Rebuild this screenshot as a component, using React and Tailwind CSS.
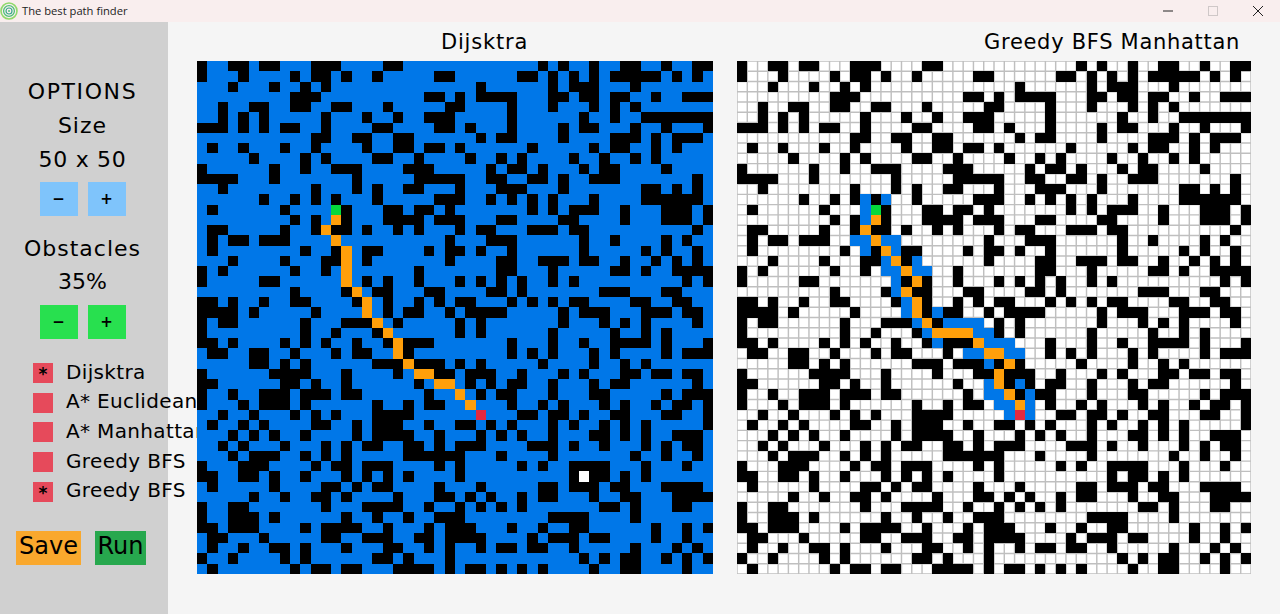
const FONT = "font-['DejaVu_Sans',sans-serif]";

// black cells per row, read off the picture (both grids share them)
const WALLS = [
  [0, 3, 4, 6, 7, 11, 12, 13, 18, 19, 33, 35, 38, 41, 42, 45, 48, 49],
  [0, 4, 9, 11, 12, 14, 17, 23, 24, 31, 32, 34, 36, 38, 40, 41, 42, 43, 44, 46, 48],
  [3, 7, 10, 12, 27, 34, 36, 37, 38, 42],
  [9, 10, 11, 22, 23, 25, 27, 28, 29, 30, 34, 35, 37, 38, 40, 41, 44, 47, 48, 49],
  [2, 5, 6, 9, 10, 13, 14, 18, 24, 25, 30, 34, 38, 40, 42],
  [2, 4, 6, 12, 16, 19, 22, 23, 24, 30, 37, 40, 43, 44, 45, 46, 47, 48, 49],
  [0, 1, 2, 4, 6, 8, 9, 12, 17, 18, 23, 24, 26, 30, 35, 37, 38, 42, 45, 49],
  [11, 12, 15, 16, 19, 20, 27, 29, 30, 35, 40, 41, 42, 44, 46, 47, 48],
  [1, 4, 8, 11, 16, 19, 20, 22, 23, 25, 32, 38, 40, 41, 44, 46],
  [5, 10, 12, 17, 18, 21, 26, 29, 31, 36, 39, 42, 44],
  [0, 7, 10, 13, 14, 15, 20, 21, 22, 28, 30, 31, 33, 37, 39, 40, 45],
  [0, 1, 2, 3, 7, 15, 21, 22, 23, 24, 25, 28, 29, 32, 33, 35, 38, 39, 40, 48],
  [2, 11, 15, 17, 20, 21, 25, 29, 30, 31, 35, 43, 44, 46, 48],
  [6, 9, 11, 13, 17, 23, 24, 25, 28, 30, 32, 34, 38, 43, 44, 45, 46, 47, 48],
  [1, 8, 14, 18, 19, 21, 22, 24, 32, 34, 36, 37, 38, 41, 45, 46, 47, 49],
  [9, 11, 14, 18, 19, 20, 21, 23, 24, 25, 29, 30, 35, 36, 41, 45, 46, 47, 49],
  [1, 2, 8, 11, 13, 14, 16, 19, 21, 25, 27, 28, 32, 33, 34, 36, 37, 48],
  [1, 3, 4, 6, 7, 8, 24, 28, 29, 30, 37, 40, 45, 47],
  [1, 10, 13, 16, 17, 22, 24, 25, 27, 30, 37, 43, 45, 48],
  [3, 8, 12, 13, 16, 24, 29, 30, 33, 34, 35, 37, 38, 41, 44, 46, 48],
  [0, 2, 9, 12, 21, 29, 30, 34, 40, 41, 43, 46, 47, 48, 49],
  [0, 6, 7, 16, 18, 21, 25, 27, 29, 31, 34, 36, 47, 49],
  [9, 14, 17, 18, 22, 23, 28, 29, 31, 39, 40, 41, 45, 46],
  [0, 1, 3, 6, 9, 10, 15, 18, 21, 23, 25, 26, 30, 32, 34, 36, 37, 42, 43, 46, 47],
  [0, 1, 2, 3, 5, 11, 18, 20, 21, 24, 26, 27, 28, 29, 35, 37, 38, 39, 43, 44, 45, 47, 48],
  [0, 2, 3, 10, 14, 15, 16, 19, 25, 27, 35, 39, 41, 43, 48],
  [0, 10, 13, 17, 25, 27, 34, 40, 43, 45],
  [0, 1, 3, 8, 10, 12, 15, 18, 20, 21, 22, 30, 34, 37, 40, 41, 42, 43, 45, 49],
  [1, 2, 5, 6, 9, 13, 15, 16, 20, 30, 32, 34, 38, 40, 45, 47, 48, 49],
  [5, 6, 8, 10, 17, 18, 19, 21, 22, 23, 25, 27, 33, 38, 41, 43],
  [0, 7, 8, 9, 10, 14, 19, 23, 24, 26, 27, 28, 31, 35, 37, 41, 42, 44, 45, 47, 48],
  [0, 1, 8, 9, 11, 14, 21, 26, 28, 30, 31, 34, 38, 40, 41, 48],
  [0, 3, 6, 7, 8, 10, 11, 12, 14, 15, 22, 27, 29, 30, 34, 38, 39, 45, 47, 48, 49],
  [0, 4, 6, 7, 8, 10, 17, 20, 22, 23, 30, 33, 35, 39, 41, 44, 46, 47, 49],
  [2, 5, 9, 11, 13, 17, 18, 19, 20, 31, 32, 34, 35, 37, 40, 41, 45, 46, 49],
  [1, 4, 6, 11, 12, 15, 17, 18, 19, 22, 25, 26, 28, 30, 34, 36, 39, 41, 43, 49],
  [3, 5, 7, 10, 15, 17, 18, 19, 20, 23, 27, 29, 31, 34, 38, 39, 41, 43, 46, 47, 48],
  [2, 4, 8, 12, 14, 16, 17, 20, 21, 23, 25, 26, 27, 32, 33, 34, 36, 39, 43, 45, 47, 48],
  [3, 5, 6, 7, 10, 12, 14, 20, 21, 22, 23, 24, 25, 29, 34, 42, 45, 48],
  [0, 4, 5, 6, 11, 13, 14, 16, 17, 18, 23, 25, 31, 33, 36, 37, 38, 39, 43, 47],
  [0, 1, 4, 5, 7, 10, 14, 16, 18, 20, 25, 36, 38, 39, 41, 43],
  [1, 7, 12, 13, 15, 17, 18, 23, 27, 33, 34, 36, 37, 38, 40, 41, 45, 46, 47, 48],
  [5, 8, 11, 12, 14, 19, 23, 24, 26, 28, 31, 33, 34, 38, 41, 42, 46, 47, 48, 49],
  [0, 3, 4, 12, 16, 17, 18, 19, 22, 25, 27, 29, 31, 39, 40, 42, 46, 47],
  [0, 3, 4, 5, 7, 14, 17, 20, 23, 24, 25, 34, 35, 36, 37, 42],
  [0, 1, 3, 4, 5, 10, 12, 13, 14, 15, 18, 22, 24, 25, 26, 30, 33, 36, 37, 44, 47, 49],
  [1, 2, 6, 12, 13, 16, 17, 18, 21, 22, 24, 25, 26, 27, 32, 34, 35, 36, 38, 39, 44, 47],
  [1, 4, 7, 8, 10, 14, 18, 19, 22, 24, 27, 29, 30, 32, 33, 36, 42, 46, 48],
  [0, 3, 8, 10, 17, 18, 20, 24, 37, 39, 41, 42, 45, 47, 49],
  [1, 9, 11, 12, 14, 15, 19, 20, 21, 22, 24, 26, 27, 29, 31, 33, 38, 41, 42, 47],
];

// [row, col] cells
const DIJKSTRA_PATH = [
  [15, 13], [16, 12], [17, 13], [18, 14], [19, 14], [20, 14], [21, 14], [22, 15], [23, 16], [24, 16],
  [25, 17], [26, 18], [27, 19], [28, 19], [29, 20], [30, 21], [30, 22], [31, 23], [31, 24], [32, 25], [33, 26],
];
const GREEDY_PATH = [
  [15, 13], [16, 12], [17, 13], [18, 14], [19, 15], [20, 16], [21, 17], [22, 16], [23, 17], [24, 17], [25, 18],
  [26, 19], [26, 20], [26, 21], [26, 22], [27, 23], [28, 24], [28, 25], [29, 26], [30, 25], [31, 25], [32, 26], [33, 27],
];
const GREEDY_SEEN = [
  [13, 12], [13, 14], [14, 12], [15, 12], [17, 11], [17, 12], [17, 14], [17, 15], [18, 12], [18, 15], [19, 14], [19, 17],
  [20, 14], [20, 15], [20, 17], [20, 18], [21, 15], [22, 15], [23, 16], [24, 16], [24, 19], [25, 17], [25, 20], [25, 21],
  [25, 22], [25, 23], [26, 18], [26, 23], [26, 24], [27, 19], [27, 24], [27, 25], [27, 26], [28, 22], [28, 23], [28, 26],
  [28, 27], [29, 24], [31, 24], [31, 27], [32, 24], [32, 25], [32, 28], [33, 25], [33, 26], [33, 28], [34, 26], [34, 28],
];

const START = [14, 13];
const GOAL = [34, 27];

function Cell({ cell, fill }) {
  return <rect x={cell[1]} y={cell[0]} width={1} height={1} fill={fill} />;
}

function Walls() {
  return WALLS.flatMap((cols, r) => cols.map((c) => <Cell key={`${r}-${c}`} cell={[r, c]} fill="#000" />));
}

function Markers({ path }) {
  return (
    <>
      {path.map((cell) => (
        <Cell key={cell.join()} cell={cell} fill="#ff9f0a" />
      ))}
      <Cell cell={START} fill="#05d83c" />
      <Cell cell={GOAL} fill="#e5283f" />
    </>
  );
}

function DijkstraGrid() {
  return (
    <svg width="516" height="513" viewBox="0 0 50 50" preserveAspectRatio="none" shapeRendering="crispEdges" className="block shrink-0">
      <rect width="50" height="50" fill="#0077e8" />
      <Walls />
      <Cell cell={[40, 37]} fill="#fff" />
      <Markers path={DIJKSTRA_PATH} />
    </svg>
  );
}

function GreedyGrid() {
  const lines = Array.from({ length: 51 }, (_, i) => i);
  return (
    <svg width="514" height="513" viewBox="0 0 50 50" preserveAspectRatio="none" className="block shrink-0">
      <rect width="50" height="50" fill="#fff" />
      {lines.map((i) => (
        <g key={i} stroke="#bfbfbf">
          <line x1={i} y1="0" x2={i} y2="50" strokeWidth="0.14" />
          <line x1="0" y1={i} x2="50" y2={i} strokeWidth="0.14" />
        </g>
      ))}
      <g shapeRendering="crispEdges">
        {GREEDY_SEEN.map((cell) => (
          <Cell key={cell.join()} cell={cell} fill="#0077e8" />
        ))}
        <Walls />
        <Markers path={GREEDY_PATH} />
      </g>
    </svg>
  );
}

function StepButtons({ color }) {
  return (
    <div className="flex gap-[10px] h-[34px]">
      <button className={`w-[38px] text-[15px] font-bold leading-none text-black ${color}`}>−</button>
      <button className={`w-[38px] text-[15px] font-bold leading-none text-black ${color}`}>+</button>
    </div>
  );
}

function Algo({ label, on }) {
  return (
    <div className="flex items-center gap-[13px] h-5 self-stretch pl-[33px] whitespace-nowrap">
      <span className="w-5 h-5 shrink-0 bg-[#e64a5b] flex justify-center pt-[3px] text-[17px] leading-[17px] font-bold text-black">
        {on ? "*" : ""}
      </span>
      <span className="pb-[3px] text-[20px] tracking-[0.35px] text-black">{label}</span>
    </div>
  );
}

function TitleBar() {
  return (
    <div className="h-[22px] shrink-0 bg-[#f9eeee] flex items-center">
      <svg width="18" height="18" viewBox="0 0 18 18" fill="none" className="shrink-0">
        <circle cx="9" cy="9" r="8" stroke="#8fd96a" strokeWidth="1.6" />
        <circle cx="9" cy="9" r="5.4" stroke="#4cc07a" strokeWidth="1.3" />
        <circle cx="9" cy="9" r="3" stroke="#3aa88a" strokeWidth="1.2" />
        <circle cx="9" cy="9" r="1" fill="#4cc07a" />
      </svg>
      <span className="ml-1 text-[11.2px] text-[#222] font-['Open_Sans',sans-serif]">The best path finder</span>
      <div className="ml-auto flex items-center gap-[35px] pr-[17px]">
        <svg width="10" height="10" viewBox="0 0 10 10">
          <path d="M0 5h10" stroke="#222" strokeWidth="1" />
        </svg>
        <svg width="10" height="10" viewBox="0 0 10 10" fill="none">
          <rect x="0.5" y="0.5" width="9" height="9" stroke="#cfc8c8" />
        </svg>
        <svg width="10" height="10" viewBox="0 0 10 10">
          <path d="M0 0l10 10M10 0L0 10" stroke="#222" strokeWidth="1" />
        </svg>
      </div>
    </div>
  );
}

function Sidebar() {
  return (
    <aside className="w-[168px] shrink-0 bg-[#d0d0d0] flex flex-col items-center pt-[52px] pr-[3px]">
      <div className="h-[34px] flex items-center text-[22px] tracking-[1.6px]">OPTIONS</div>
      <div className="h-[34px] flex items-center text-[22px] tracking-[1px]">Size</div>
      <div className="h-[34px] flex items-center text-[22px] tracking-[0.7px]">50 x 50</div>
      <div className="mt-[6px]">
        <StepButtons color="bg-[#7fc4fb]" />
      </div>
      <div className="mt-[16px] h-[33px] flex items-center text-[22px] tracking-[1px]">Obstacles</div>
      <div className="h-[33px] flex items-center text-[22px]">35%</div>
      <div className="mt-[7px]">
        <StepButtons color="bg-[#28e04f]" />
      </div>
      <div className="mt-[24px] flex flex-col gap-[9.7px] self-stretch">
        <Algo label="Dijsktra" on />
        <Algo label="A* Euclidean" />
        <Algo label="A* Manhattan" />
        <Algo label="Greedy BFS" />
        <Algo label="Greedy BFS" on />
      </div>
      <div className="mt-[29px] flex gap-[14px] self-stretch pl-4">
        <button className="w-[65px] h-[34px] pb-1 bg-[#f9a82d] text-[24px] leading-none text-black">Save</button>
        <button className="w-[51px] h-[34px] pb-1 bg-[#27a84e] text-[24px] leading-none text-black">Run</button>
      </div>
    </aside>
  );
}

export default function App() {
  return (
    <div className={`w-[1280px] h-[614px] overflow-hidden flex flex-col bg-[#f5f5f5] text-black ${FONT}`}>
      <TitleBar />
      <div className="flex flex-1 min-h-0">
        <Sidebar />
        <main className="pl-[29px] flex gap-6">
          <div className="w-[516px]">
            <div className="h-[39px] flex items-center pt-[3px] pl-[244px] text-[21px] tracking-[0.8px]">Dijsktra</div>
            <DijkstraGrid />
          </div>
          <div className="w-[514px]">
            <div className="h-[39px] flex items-center justify-end pt-[3px] pr-[11px] text-[21px] tracking-[0.7px] whitespace-nowrap">Greedy BFS Manhattan</div>
            <GreedyGrid />
          </div>
        </main>
      </div>
    </div>
  );
}
